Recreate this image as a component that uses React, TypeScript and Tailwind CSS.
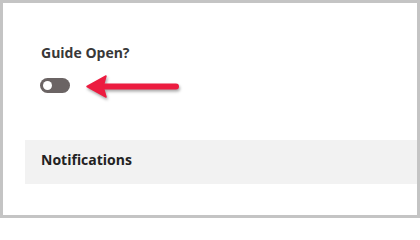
const Toggle = () => (
  <div className="w-[30px] h-[15px] rounded-full bg-[#6b6464] flex items-center pl-[3px]">
    <div className="w-[9px] h-[9px] rounded-full bg-white" />
  </div>
);

const Arrow = () => (
  <svg
    className="absolute left-[80px] top-[68px]"
    width="100"
    height="34"
    viewBox="0 0 100 34"
    style={{ filter: "drop-shadow(1px 2px 1.5px rgba(0,0,0,0.35))" }}
  >
    <line x1="20" y1="15.5" x2="93" y2="15.5" stroke="#ec1c40" strokeWidth="6" strokeLinecap="round" />
    <path d="M4 15.5 L23 5 L20 15.5 L23 26 Z" fill="#ec1c40" stroke="#ec1c40" strokeWidth="1.5" strokeLinejoin="round" />
  </svg>
);

export default function App() {
  return (
    <div className="relative w-[420px] h-[218px] border-[3px] border-[#c4c4c4] bg-white font-['Open_Sans',sans-serif]">
      <div className="pt-[40px] pl-[38px]">
        <div className="text-[14px] leading-[20px] font-bold text-[#383838]">Guide Open?</div>
        <div className="mt-[15px] -ml-[1px]">
          <Toggle />
        </div>
      </div>
      <div className="mt-[47px] ml-[22px] h-[44px] bg-[#f2f2f2] pt-[10px] pl-[16px]">
        <div className="text-[14px] leading-[20px] font-bold text-[#222222]">Notifications</div>
      </div>
      <Arrow />
    </div>
  );
}
